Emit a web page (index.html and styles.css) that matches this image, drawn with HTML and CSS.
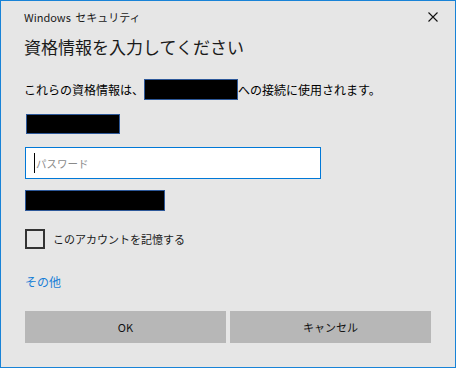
FILE: index.html
```html
<!DOCTYPE html>
<html lang="ja">
<head>
    <meta charset="UTF-8">
    <meta name="viewport" content="width=device-width, initial-scale=1.0">
    <title>Windows セキュリティ</title>
    <link rel="stylesheet" href="styles.css">
</head>
<body>
    <div class="window">
        <div class="titlebar">
            <span class="title">Windows セキュリティ</span>
            <svg class="close" width="10" height="10" viewBox="0 0 10 10">
                <path d="M0.5 0.5 L9.5 9.5 M9.5 0.5 L0.5 9.5" stroke="#111" stroke-width="1.1" fill="none"/>
            </svg>
        </div>
        <div class="content">
            <h1>資格情報を入力してください</h1>
            <p class="message">これらの資格情報は、<span class="redact redact-host"></span>への接続に使用されます。</p>
            <div class="redact redact-user"></div>
            <div class="field">
                <span class="caret"></span>
                <span class="placeholder">パスワード</span>
            </div>
            <div class="redact redact-domain"></div>
            <label class="remember">
                <span class="checkbox"></span>
                <span>このアカウントを記憶する</span>
            </label>
            <a class="more" href="#">その他</a>
            <div class="buttons">
                <button type="button">OK</button>
                <button type="button">キャンセル</button>
            </div>
        </div>
    </div>
</body>
</html>
```

FILE: styles.css
```css
body {
    margin: 0;
    font-family: "Noto Sans CJK JP", "Noto Sans", sans-serif;
    color: #000;
}
.window {
    width: 456px;
    height: 368px;
    box-sizing: border-box;
    border: 1px solid #1883d7;
    background-color: #e6e6e6;
}
.titlebar {
    height: 32px;
    display: flex;
    align-items: center;
    justify-content: space-between;
    padding: 0 17px 0 23px;
}
.title {
    font-size: 11px;
    word-spacing: 2px;
    color: #1a1a1a;
}
.content {
    padding: 0 24px 0 23px;
}
h1 {
    margin: 2px 0 0;
    font-size: 17px;
    line-height: 24px;
    font-weight: normal;
    color: #1a1a1a;
}
.message {
    margin: 20px 0 0;
    display: flex;
    align-items: center;
    height: 21px;
    font-size: 12px;
}
.redact {
    box-sizing: border-box;
    background-color: #000;
    border: 1px solid #2d5899;
}
.redact-host {
    display: inline-block;
    width: 94px;
    height: 21px;
}
.redact-user {
    margin: 14px 0 0 2px;
    width: 94px;
    height: 20px;
}
.field {
    margin: 13px 0 0 1px;
    width: 296px;
    height: 32px;
    box-sizing: border-box;
    border: 1px solid #0078d7;
    background-color: #fff;
    display: flex;
    align-items: center;
    padding-left: 8px;
}
.caret {
    width: 1px;
    height: 20px;
    background-color: #000;
    margin-right: 1px;
}
.placeholder {
    font-size: 10.5px;
    color: #8a8a8a;
}
.redact-domain {
    margin: 11px 0 0 1px;
    width: 140px;
    height: 21px;
}
.remember {
    margin: 18px 0 0 1px;
    display: flex;
    align-items: center;
    font-size: 11px;
    color: #1a1a1a;
}
.checkbox {
    width: 20px;
    height: 20px;
    box-sizing: border-box;
    border: 2px solid #333;
    margin-right: 8px;
}
.more {
    display: block;
    margin: 23px 0 0 1px;
    line-height: 20px;
    font-size: 12px;
    color: #1a7fd6;
    text-decoration: none;
    width: max-content;
}
.buttons {
    margin: 19px 0 0 1px;
    display: flex;
    gap: 4px;
}
button {
    width: 201px;
    height: 32px;
    border: none;
    background-color: #b7b7b7;
    font-family: inherit;
    font-size: 11px;
    color: #111;
    padding: 0;
}
```
